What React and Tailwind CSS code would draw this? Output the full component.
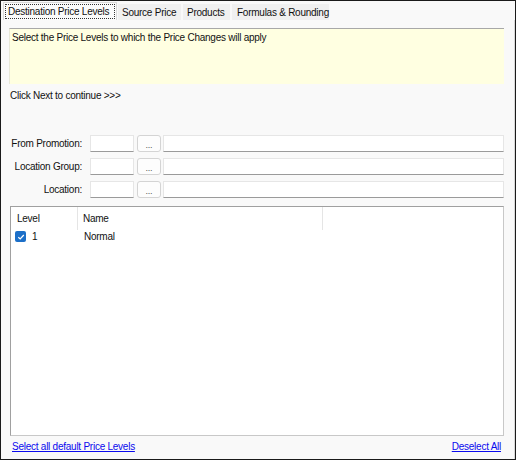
import React from "react";

const font = { fontFamily: '"Liberation Sans", Arial, sans-serif' };

function TextBox({ className = "" }) {
  return (
    <div className={`h-[17px] bg-white border border-[#e6e6e6] border-b-[#9a9a9a] ${className}`} />
  );
}

function Browse() {
  return (
    <div className="h-[17px] w-[24px] ml-[3px] rounded-[3px] border border-[#d4d4d4] bg-[#fdfdfd] flex items-end justify-center text-[9px] leading-[12px] text-[#555]">
      ...
    </div>
  );
}

function Row({ label }) {
  return (
    <div className="flex items-center h-[17px]">
      <div className="w-[73px] text-right">{label}</div>
      <TextBox className="ml-[8px] w-[44px]" />
      <Browse />
      <TextBox className="ml-[2px] flex-1" />
    </div>
  );
}

export default function App() {
  return (
    <div
      className="w-[516px] h-[460px] flex flex-col bg-[#f9f9f9] border border-[#1a1a1a] text-[10px] leading-[12px] tracking-[-0.25px] text-[#111] whitespace-nowrap"
      style={font}
    >
      {/* tab strip */}
      <div className="h-[19px] flex items-end pl-[2px] bg-[#f9f9f9]">
        <div className="h-[18px] w-[114px] bg-[#fbfbfb] border border-b-0 border-[#d9d9d9] p-[1px]">
          <div className="h-full border border-dotted border-[#333] flex items-center pl-[2px] pt-[1px]">
            Destination Price Levels
          </div>
        </div>
        <div className="h-[16px] w-[63px] ml-[1px] bg-[#f0f0f0] flex items-center pl-[4px] pt-[1px]">Source Price</div>
        <div className="h-[16px] w-[47px] ml-[2px] bg-[#f0f0f0] flex items-center pl-[4px] pt-[1px]">Products</div>
        <div className="h-[16px] w-[97px] ml-[2px] bg-[#f0f0f0] flex items-center pl-[5px] pt-[1px]">Formulas &amp; Rounding</div>
      </div>

      {/* panel */}
      <div className="flex-1 flex flex-col border-r border-[#d8d8d8] pl-[8px] pr-[10px] pt-[8px]">
        <div className="h-[56px] bg-[#ffffe1] border-t border-[#a8a8a8] border-l border-l-[#e8e8d8] pl-[2px] pt-[3px]">
          Select the Price Levels to which the Price Changes will apply
        </div>
        <div className="mt-[6px] pl-[1px]">Click Next to continue &gt;&gt;&gt;</div>

        <div className="mt-[33px] flex flex-col gap-[6px]">
          <Row label="From Promotion:" />
          <Row label="Location Group:" />
          <Row label="Location:" />
        </div>

        {/* list */}
        <div className="mt-[8px] ml-[1px] h-[230px] bg-white border border-[#a0a0a0] border-r-[#c8c8c8] border-b-[#c8c8c8]">
          <div className="flex h-[23px] items-center">
            <div className="w-[67px] h-full flex items-center pl-[6px] border-r border-[#e5e5e5]">Level</div>
            <div className="w-[245px] h-full flex items-center pl-[5px] border-r border-[#e5e5e5]">Name</div>
          </div>
          <div className="flex h-[13px] items-center">
            <div className="w-[67px] flex items-center pl-[4px]">
              <div className="w-[11px] h-[11px] rounded-[2px] bg-[#1c6fc8] flex items-center justify-center">
                <svg width="8" height="8" viewBox="0 0 8 8">
                  <path d="M1.3 4.2 L3.2 6 L6.8 2" stroke="white" strokeWidth="1.2" fill="none" />
                </svg>
              </div>
              <span className="ml-[6px]">1</span>
            </div>
            <div className="pl-[6px]">Normal</div>
          </div>
        </div>

        <div className="mt-[5px] flex justify-between pl-[3px] pr-[3px]">
          <span className="text-[#0a0aee] underline">Select all default Price Levels</span>
          <span className="text-[#0a0aee] underline">Deselect All</span>
        </div>
      </div>
    </div>
  );
}
